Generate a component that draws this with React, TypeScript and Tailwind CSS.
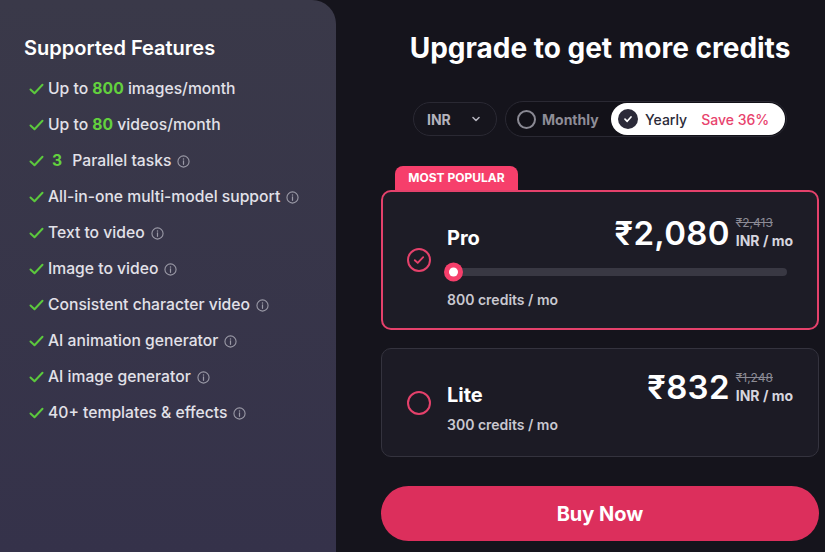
import React from "react";

const Check = () => (
  <svg width="15" height="12" viewBox="0 0 15 12" fill="none" className="shrink-0">
    <path d="M1.5 6.5 L5.5 10.2 L13.5 1.8" stroke="#5cc93d" strokeWidth="2" strokeLinecap="round" strokeLinejoin="round" />
  </svg>
);

const Info = () => (
  <svg width="13" height="13" viewBox="0 0 14 14" fill="none" className="shrink-0 ml-[6px]">
    <circle cx="7" cy="7" r="6" stroke="#9a99a6" strokeWidth="1.2" />
    <circle cx="7" cy="4.3" r="0.8" fill="#9a99a6" />
    <path d="M7 6.3 V10" stroke="#9a99a6" strokeWidth="1.3" strokeLinecap="round" />
  </svg>
);

type Feat = { node: React.ReactNode; info?: boolean };

const feats: Feat[] = [
  { node: <>Up to <span className="text-[#63d13e] font-bold">800</span> images/month</> },
  { node: <>Up to <span className="text-[#63d13e] font-bold">80</span> videos/month</> },
  { node: <><span className="text-[#63d13e] font-bold ml-[4px] mr-[6px]">3</span> Parallel tasks</>, info: true },
  { node: <>All-in-one multi-model support</>, info: true },
  { node: <>Text to video</>, info: true },
  { node: <>Image to video</>, info: true },
  { node: <>Consistent character video</>, info: true },
  { node: <>AI animation generator</>, info: true },
  { node: <>AI image generator</>, info: true },
  { node: <>40+ templates &amp; effects</>, info: true },
];

export default function App() {
  return (
    <div
      className="w-[825px] h-[552px] flex bg-[#15141c] overflow-hidden"
      style={{ fontFamily: "Inter, 'Noto Sans', sans-serif" }}
    >
      {/* Left panel */}
      <div className="w-[336px] h-full shrink-0 rounded-tr-[24px] bg-gradient-to-b from-[#3a3949] to-[#35324a] pl-[24px] pt-[36px]">
        <h2 className="text-white text-[20px] font-semibold leading-[24px]">Supported Features</h2>
        <ul className="mt-[17px] flex flex-col gap-[12px]">
          {feats.map((f, i) => (
            <li key={i} className="flex items-center h-[24px] pl-[5px] text-[#e2e1e8] text-[15.7px] font-medium">
              <Check />
              <span className="ml-[4px] whitespace-nowrap">{f.node}</span>
              {f.info && <Info />}
            </li>
          ))}
        </ul>
      </div>

      {/* Right side */}
      <div className="flex-1 pl-[45px] pr-[6px] pt-[30px] flex flex-col">
        <h1 className="text-white text-[28px] font-bold text-center leading-[36px]">
          Upgrade to get more credits
        </h1>

        <div className="mt-[35px] flex justify-center items-center gap-[8px]">
          <div className="w-[84px] h-[34px] rounded-full border border-[#2a2933] bg-[#16151d] flex items-center pl-[13px] pr-[14px] justify-between">
            <span className="text-[#b4b3bd] text-[14px] font-bold">INR</span>
            <svg width="12" height="12" viewBox="0 0 12 12" fill="none">
              <path d="M3 4.5 L6 7.5 L9 4.5" stroke="#b4b3bd" strokeWidth="1.6" strokeLinecap="round" strokeLinejoin="round" />
            </svg>
          </div>
          <div className="w-[282px] h-[36px] rounded-full border border-[#2a2933] bg-[#121118] flex items-center p-[1px]">
            <div className="flex items-center pl-[10px] w-[104px]">
              <span className="w-[19px] h-[19px] rounded-full border-2 border-[#8a8993]" />
              <span className="ml-[6px] text-[#8e8d97] text-[14px] font-bold">Monthly</span>
            </div>
            <div className="flex-1 h-[32px] bg-white rounded-full flex items-center pl-[7px]">
              <span className="w-[20px] h-[20px] rounded-full bg-[#2b2a38] flex items-center justify-center">
                <svg width="10" height="10" viewBox="0 0 10 10" fill="none">
                  <path d="M2 5.2 L4.2 7.3 L8 3" stroke="white" strokeWidth="1.7" strokeLinecap="round" strokeLinejoin="round" />
                </svg>
              </span>
              <span className="ml-[7px] text-[#2b2a38] text-[14px] font-medium">Yearly</span>
              <span className="ml-[14px] text-[#e8436d] text-[14px] font-medium">Save 36%</span>
            </div>
          </div>
        </div>

        {/* Pro card */}
        <div className="mt-[29px] flex flex-col">
          <div className="ml-[14px] w-[123px] h-[24px] bg-[#f63f6b] rounded-t-[8px] flex items-center justify-center">
            <span className="text-white text-[12px] font-bold">MOST POPULAR</span>
          </div>
          <div className="h-[140px] rounded-[10px] border-2 border-[#e5416b] bg-[#1d1c26] flex items-center pl-[24px] pr-[24px]">
            <span className="w-[24px] h-[24px] rounded-full border-2 border-[#e5416b] flex items-center justify-center shrink-0">
              <svg width="14" height="14" viewBox="0 0 12 12" fill="none">
                <path d="M2.4 6.2 L4.9 8.5 L9.6 3.6" stroke="#e5416b" strokeWidth="1.6" strokeLinecap="round" strokeLinejoin="round" />
              </svg>
            </span>
            <div className="flex-1 ml-[14px] flex flex-col mt-[2px]">
              <div className="flex items-end justify-between pl-[2px]">
                <span className="text-white text-[20px] font-bold leading-[24px] mb-[1px]">Pro</span>
                <div className="flex items-center mb-[-2px]">
                  <span className="text-white text-[33px] font-semibold leading-[40px] tracking-[0.3px]">₹2,080</span>
                  <div className="ml-[6px] flex flex-col leading-none">
                    <span className="text-[#8c8b95] text-[12px] line-through">₹2,413</span>
                    <span className="mt-[5px] text-[#d6d5de] text-[14px] font-bold">INR / mo</span>
                  </div>
                </div>
              </div>
              <div className="relative mt-[17px] h-[8px] rounded-full bg-[#393843] mr-[6px]">
                <span className="absolute left-[-1px] top-1/2 -translate-y-1/2 w-[19px] h-[19px] rounded-full bg-[#f63f6b] flex items-center justify-center">
                  <span className="w-[9px] h-[9px] rounded-full bg-white" />
                </span>
              </div>
              <span className="mt-[13px] pl-[2px] text-[#c9c8d0] text-[14px] font-semibold">800 credits / mo</span>
            </div>
          </div>
        </div>

        {/* Lite card */}
        <div className="mt-[18px] h-[109px] rounded-[10px] border border-[#34333e] bg-[#1c1b25] flex items-center pl-[25px] pr-[25px]">
          <span className="w-[24px] h-[24px] rounded-full border-2 border-[#e5416b] shrink-0" />
          <div className="flex-1 ml-[14px] flex items-start justify-between">
            <div className="flex flex-col pl-[2px] pt-[13px]">
              <span className="text-white text-[20px] font-bold leading-[24px]">Lite</span>
              <span className="mt-[7px] text-[#c9c8d0] text-[14px] font-semibold">300 credits / mo</span>
            </div>
            <div className="flex items-center mt-[-3px]">
              <span className="text-white text-[33px] font-semibold leading-[40px] tracking-[0.3px]">₹832</span>
              <div className="ml-[6px] flex flex-col leading-none">
                <span className="text-[#8c8b95] text-[12px] line-through">₹1,248</span>
                <span className="mt-[5px] text-[#d6d5de] text-[14px] font-bold">INR / mo</span>
              </div>
            </div>
          </div>
        </div>

        <button className="mt-[29px] h-[55px] rounded-full bg-[#dc2f5c] text-white text-[20px] font-bold">
          Buy Now
        </button>
      </div>
    </div>
  );
}
